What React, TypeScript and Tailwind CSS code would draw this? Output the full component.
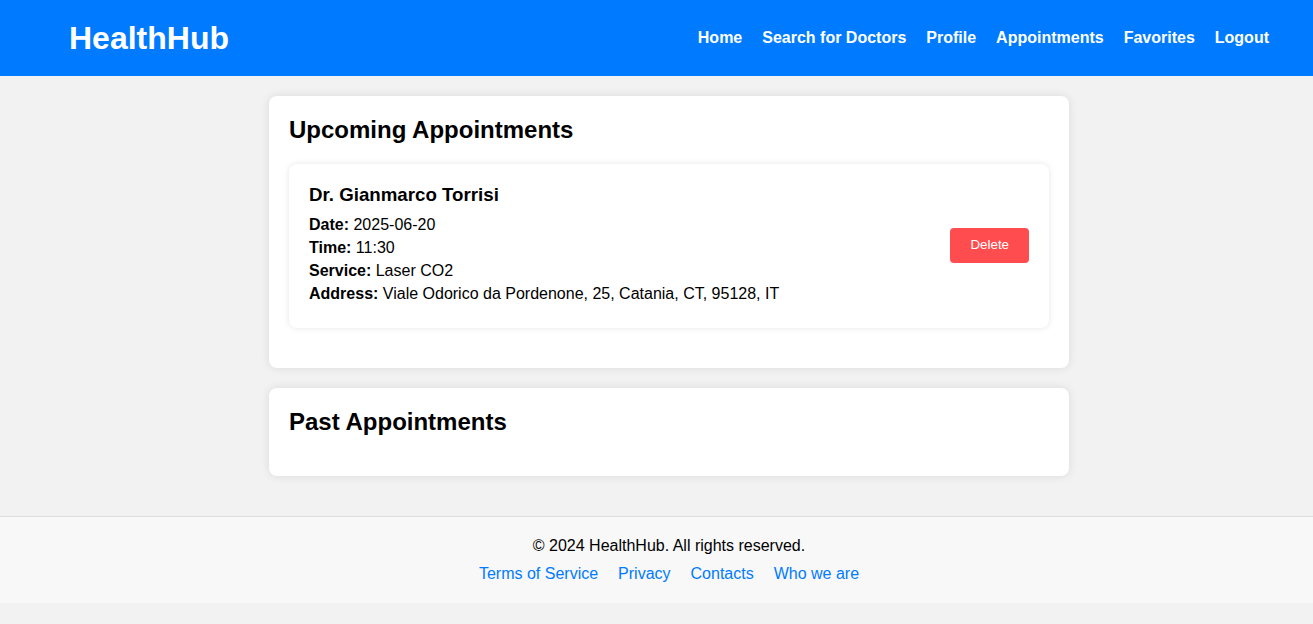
import React from "react";

export default function App() {
  return (
    <div className="min-h-[624px] bg-[#f2f2f2] text-black" style={{ fontFamily: '"Liberation Sans", Arial, sans-serif' }}>
      <header className="flex h-[76px] items-center justify-between bg-[#007bff] pl-[69px] pr-[44px] text-white">
        <h1 className="text-[32px] font-bold leading-none">HealthHub</h1>
        <nav className="flex gap-5 text-[16px] font-bold">
          <a>Home</a>
          <a>Search for Doctors</a>
          <a>Profile</a>
          <a>Appointments</a>
          <a>Favorites</a>
          <a>Logout</a>
        </nav>
      </header>

      <main className="flex flex-col items-center py-5 pl-[45px] pr-5">
        <section className="mb-5 w-[800px] rounded-lg bg-white p-5 shadow-[0_0_10px_rgba(0,0,0,0.1)]">
          <h2 className="mb-5 text-[24px] font-bold leading-[28px]">Upcoming Appointments</h2>
          <div className="mb-5 flex items-center justify-between rounded-lg bg-white px-5 pt-5 pb-[23px] shadow-[0_0_6px_rgba(0,0,0,0.1)]">
            <div>
              <h3 className="mb-[7px] text-[18.72px] font-bold leading-[21.5px]">Dr. Gianmarco Torrisi</h3>
              <div className="text-[16px] leading-[23px]">
                <p><strong>Date:</strong> 2025-06-20</p>
                <p><strong>Time:</strong> 11:30</p>
                <p><strong>Service:</strong> Laser CO2</p>
                <p><strong>Address:</strong> Viale Odorico da Pordenone, 25, Catania, CT, 95128, IT</p>
              </div>
            </div>
            <button className="mt-[2px] h-[35px] rounded-[4px] bg-[#ff4d4f] px-5 text-[13.33px] font-medium text-white">Delete</button>
          </div>
        </section>

        <section className="mb-5 w-[800px] rounded-lg bg-white p-5 shadow-[0_0_10px_rgba(0,0,0,0.1)]">
          <h2 className="mb-5 text-[24px] font-bold leading-[28px]">Past Appointments</h2>
        </section>
      </main>

      <footer className="border-t border-[#dddddd] bg-[#f8f8f8] pt-5 pr-5 pb-[20px] pl-[45px] text-center text-[16px] leading-[18px]">
        <p>© 2024 HealthHub. All rights reserved.</p>
        <div className="mt-[10px] flex justify-center gap-5 text-[#007bff]">
          <a>Terms of Service</a>
          <a>Privacy</a>
          <a>Contacts</a>
          <a>Who we are</a>
        </div>
      </footer>
    </div>
  );
}
